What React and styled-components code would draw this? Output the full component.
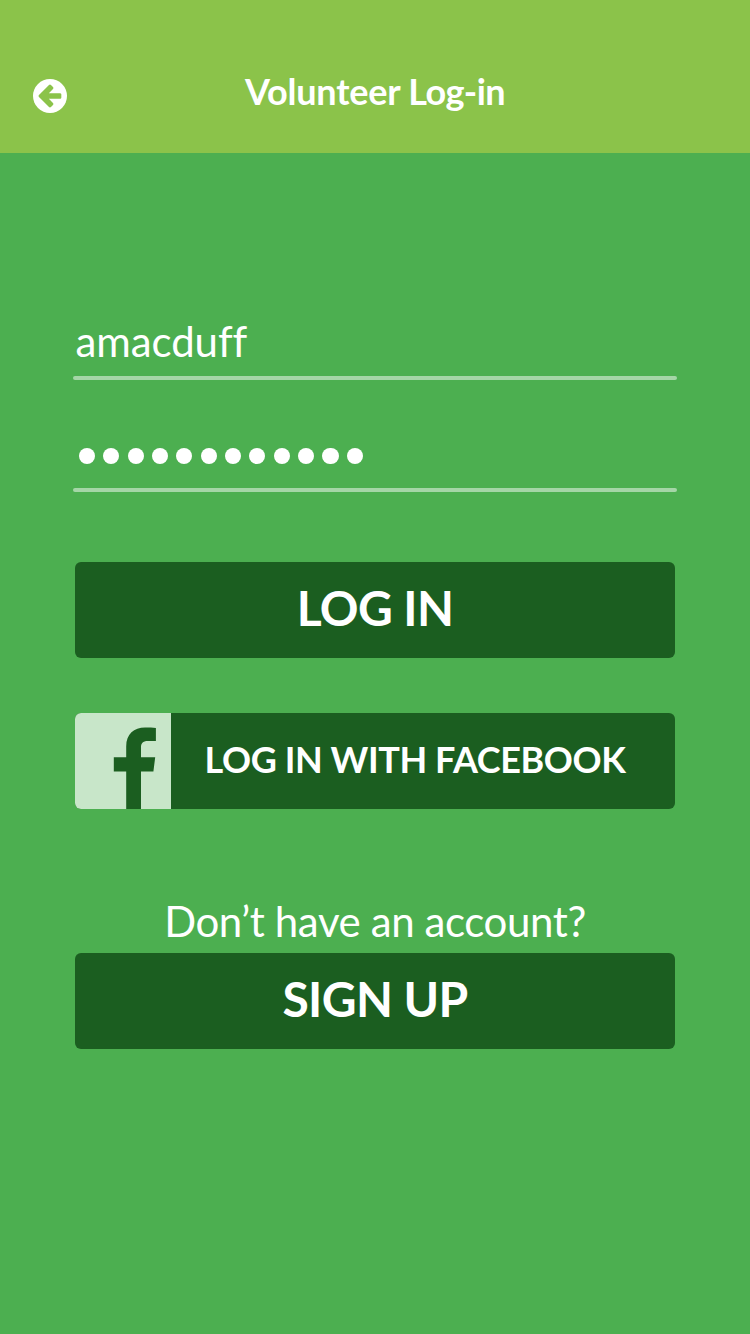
import React from "react";
import styled, { createGlobalStyle } from "styled-components";

const GlobalStyle = createGlobalStyle`
  * { box-sizing: border-box; }
  body { margin: 0; background: #4caf50; font-family: Lato, sans-serif; color: #fff; }
`;
const Screen = styled.main`
  width: 750px;
  height: 1334px;
  background: #4caf50;
  display: flex;
  flex-direction: column;
`;
const Header = styled.header`
  height: 153px;
  background: #8bc34a;
  padding: 70px 33px 0;
  display: grid;
  grid-template-columns: 34px 1fr 34px;
  align-items: start;
`;
const BackButton = styled.button`
  border: 0;
  padding: 0;
  margin-top: 9px;
  background: none;
  line-height: 0;
`;
const Title = styled.h1`
  margin: 0;
  font-size: 36px;
  line-height: 43px;
  font-weight: 700;
  letter-spacing: -0.2px;
  text-align: center;
`;
const TightWord = styled.span`
  letter-spacing: -0.6px;
`;
const Form = styled.div`
  padding: 160px 73px 0;
  display: flex;
  flex-direction: column;
`;
const Field = styled.div`
  height: ${(p) => p.$height}px;
  font-size: 42px;
  line-height: 56px;
  letter-spacing: -0.1px;
  font-variant-ligatures: none;
  display: flex;
  flex-direction: column;
  justify-content: space-between;

  &::after {
    content: "";
    height: 4px;
    border-radius: 2px;
    background: #a5d6a7;
  }
`;
const Value = styled.span`
  padding-left: 2.5px;
`;
const Dots = styled.div`
  display: flex;
  gap: 8.16px;
  padding: 68px 0 0 5.9px;
`;
const Dot = styled.span`
  width: 16.2px;
  height: 16.2px;
  border-radius: 50%;
  background: #fff;
`;
const Button = styled.button`
  height: 96px;
  width: 600px;
  margin: ${(p) => p.$top}px 2px 0;
  padding: 0;
  border: 0;
  border-radius: 6px;
  overflow: hidden;
  background: #1b5e20;
  color: #fff;
  font: 700 48px/91px Lato, sans-serif;
  letter-spacing: -0.6px;
  display: flex;
  justify-content: center;
`;
const FacebookButton = styled(Button)`
  font-size: 36px;
  line-height: 92px;
  letter-spacing: -0.4px;
  padding-right: 16px;
`;
const FacebookBadge = styled.span`
  width: 96px;
  height: 96px;
  background: #c8e6c9;
  line-height: 0;
`;
const Label = styled.span`
  flex: 1;
  text-align: center;
  white-space: nowrap;
`;
const Prompt = styled.p`
  margin: 84px 0 0;
  height: 60px;
  font-size: 42px;
  line-height: 56px;
  letter-spacing: -0.4px;
  text-align: center;
`;

export default function App() {
  return (
    <Screen>
      <GlobalStyle />
      <Header>
        <BackButton aria-label="Back">
          <svg width="34" height="34" viewBox="0 128 1536 1536">
            <circle cx="768" cy="896" r="768" fill="#fff" />
            <path
              d="M1280 960v-128q0-26-19-45t-45-19H714l189-189q19-19 19-45t-19-45l-91-91q-18-18-45-18t-45 18L360 760l-91 91q-18 18-18 45t18 45l91 91 362 362q18 18 45 18t45-18l91-91q18-18 18-45t-18-45L714 1024h502q26 0 45-19t19-45z"
              fill="#8bc34a"
            />
          </svg>
        </BackButton>
        <Title>Volunteer <TightWord>Log-in</TightWord></Title>
      </Header>
      <Form>
        <Field $height={67}><Value>amacduff</Value></Field>
        <Field $height={112}>
          <Dots>{Array.from({ length: 12 }, (_, i) => <Dot key={i} />)}</Dots>
        </Field>
        <Button $top={70}><Label>LOG IN</Label></Button>
        <FacebookButton $top={55}>
          <FacebookBadge>
            <svg width="96" height="96" viewBox="0 0 96 96">
              <path
                d="M51.2 96V58.6H38.8V44.2H51.2V33.5C51.2 21 59 14.6 70 14.6C74 14.6 78 14.7 80.9 15V28H73C67.5 28 66 30.5 66 34.5V44.2H80.2L78.4 58.6H66V96Z"
                fill="#1b5e20"
              />
            </svg>
          </FacebookBadge>
          <Label>LOG IN WITH FACEBOOK</Label>
        </FacebookButton>
        <Prompt>Don’t have an account?</Prompt>
        <Button $top={0}><Label>SIGN UP</Label></Button>
      </Form>
    </Screen>
  );
}
